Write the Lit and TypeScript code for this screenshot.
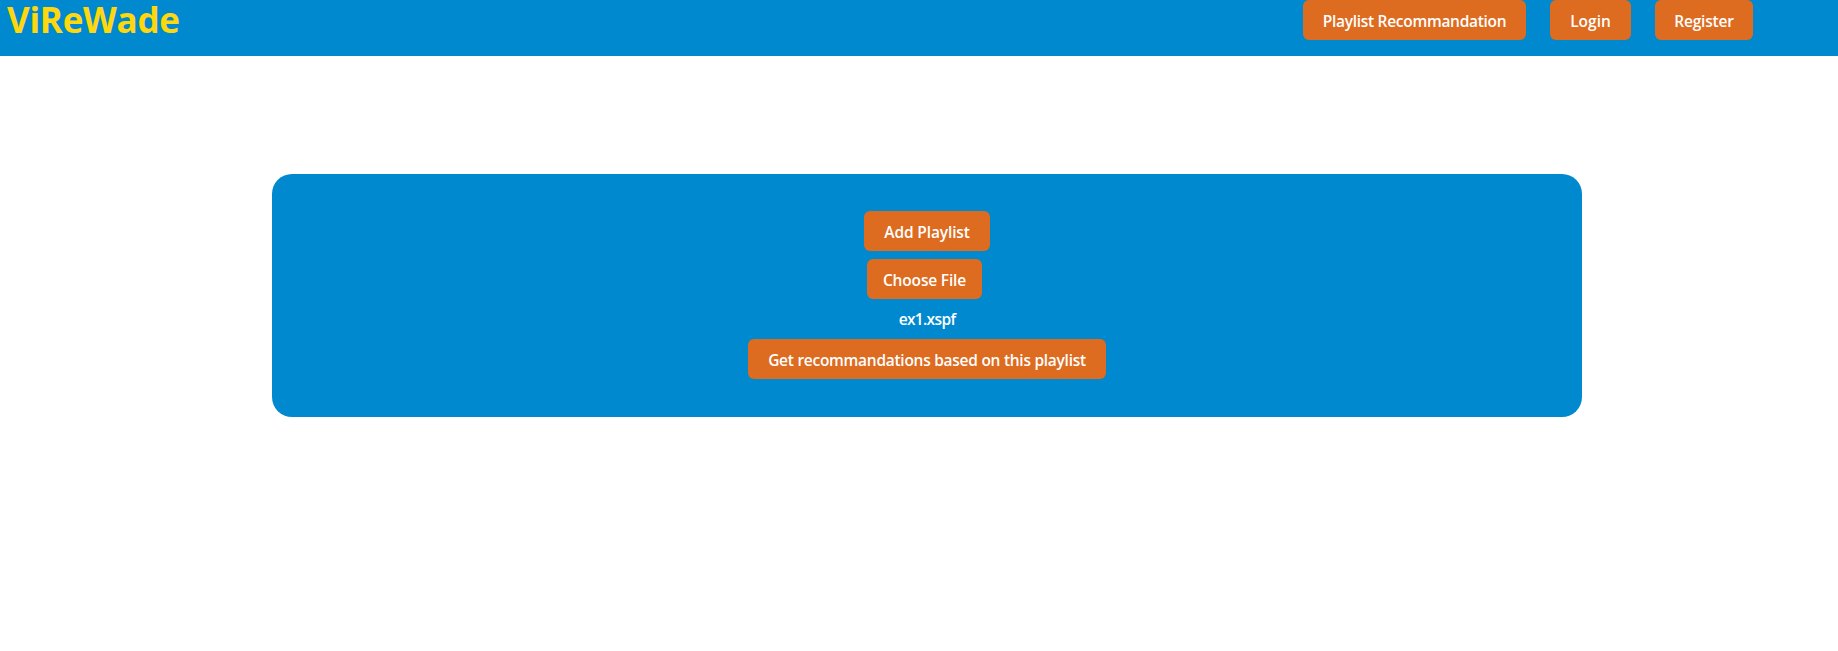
import { LitElement, html, css } from "lit";
import { customElement } from "lit/decorators.js";

@customElement("app-root")
export class AppRoot extends LitElement {
  static styles = css`
    :host {
      display: block;
      height: 651px;
      overflow: hidden;
      background: #fff;
      color: #fff;
      font: 600 15.5px/24px "Open Sans", "Noto Sans", sans-serif;
      white-space: nowrap;
    }
    header {
      display: flex;
      justify-content: space-between;
      align-items: flex-start;
      box-sizing: border-box;
      height: 56px;
      padding: 0 85px 0 7px;
      background: #0089ce;
    }
    .logo {
      color: #ffd70f;
      font-size: 35px;
      font-weight: 700;
      line-height: 39px;
      letter-spacing: -0.3px;
    }
    nav {
      display: flex;
      gap: 24px;
    }
    button {
      display: flex;
      justify-content: center;
      box-sizing: border-box;
      height: 40px;
      padding: 9px 0 7px;
      border: 0;
      border-radius: 6px;
      background: #dd6b20;
      color: inherit;
      font: inherit;
    }
    .recommend { width: 223px; letter-spacing: -0.29px; }
    .login { width: 81px; letter-spacing: 0; }
    .register { width: 98px; letter-spacing: -0.2px; }
    main {
      display: flex;
      flex-direction: column;
      align-items: center;
      box-sizing: border-box;
      width: 1310px;
      height: 243px;
      margin: 118px 0 0 272px;
      padding-top: 37px;
      border-radius: 20px;
      background: #0089ce;
    }
    .add { width: 126px; letter-spacing: -0.13px; }
    .choose { width: 115px; margin: 8px 5px 0 0; letter-spacing: -0.17px; }
    .file { height: 24px; margin: 8px 0; letter-spacing: -0.65px; }
    .submit { width: 358px; letter-spacing: -0.27px; }
  `;

  render() {
    return html`
      <header>
        <div class="logo">ViReWade</div>
        <nav>
          <button class="recommend">Playlist Recommandation</button>
          <button class="login">Login</button>
          <button class="register">Register</button>
        </nav>
      </header>
      <main>
        <button class="add">Add Playlist</button>
        <button class="choose">Choose File</button>
        <div class="file">ex1.xspf</div>
        <button class="submit">Get recommandations based on this playlist</button>
      </main>
    `;
  }
}
